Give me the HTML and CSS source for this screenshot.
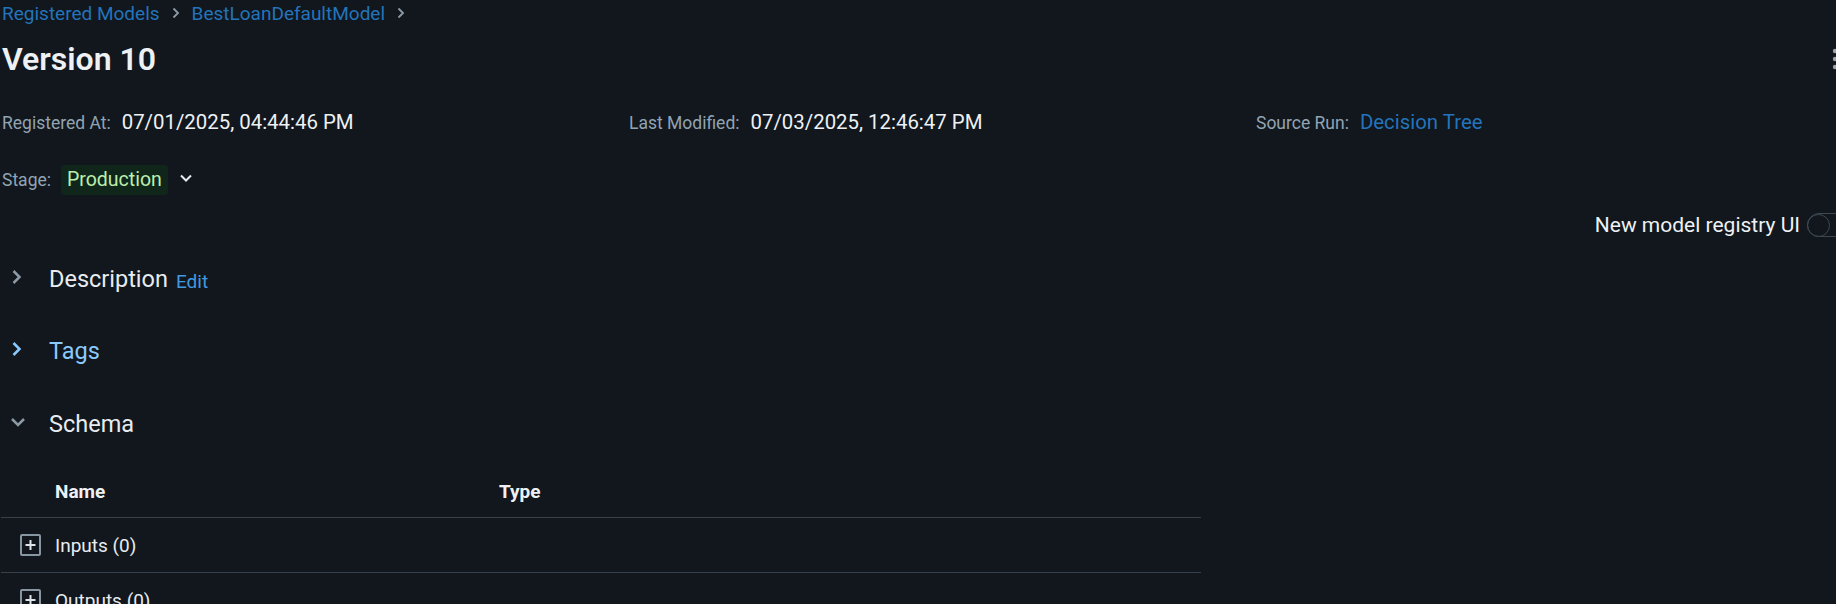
FILE: index.html
```html
<!DOCTYPE html>
<html lang="en">
<head>
<meta charset="utf-8">
<title>Version 10 - BestLoanDefaultModel</title>
<link rel="stylesheet" href="styles.css">
</head>
<body>
<div class="page">
  <nav class="breadcrumb">
    <a class="crumb" href="#">Registered Models</a>
    <svg class="crumb-sep" width="8" height="12" viewBox="0 0 8 12"><polyline points="1.5,1.5 6,6 1.5,10.5" fill="none" stroke="#8d9aa6" stroke-width="1.8"/></svg>
    <a class="crumb" href="#">BestLoanDefaultModel</a>
    <svg class="crumb-sep" width="8" height="12" viewBox="0 0 8 12"><polyline points="1.5,1.5 6,6 1.5,10.5" fill="none" stroke="#8d9aa6" stroke-width="1.8"/></svg>
  </nav>

  <div class="title-row">
    <h1 class="title">Version 10</h1>
    <svg class="kebab" width="6" height="24" viewBox="0 0 6 24"><circle cx="3" cy="4" r="2.2" fill="#98a4ae"/><circle cx="3" cy="12" r="2.2" fill="#98a4ae"/><circle cx="3" cy="20" r="2.2" fill="#98a4ae"/></svg>
  </div>

  <div class="meta">
    <div class="meta-item"><span class="meta-label">Registered At:</span><span class="meta-value">07/01/2025, 04:44:46 PM</span></div>
    <div class="meta-item"><span class="meta-label">Last Modified:</span><span class="meta-value">07/03/2025, 12:46:47 PM</span></div>
    <div class="meta-item"><span class="meta-label">Source Run:</span><a class="meta-link" href="#">Decision Tree</a></div>
  </div>

  <div class="stage-row">
    <span class="meta-label">Stage:</span>
    <span class="badge">Production</span>
    <svg class="stage-caret" width="14" height="10" viewBox="0 0 14 10"><polyline points="2,2.5 7,7.5 12,2.5" fill="none" stroke="#e8ecf0" stroke-width="2"/></svg>
  </div>

  <div class="toggle-row">
    <span class="toggle-label">New model registry UI</span>
    <span class="toggle"><span class="knob"></span></span>
  </div>

  <section class="section">
    <div class="section-head">
      <span class="chev"><svg width="16" height="16" viewBox="0 0 16 16"><polyline points="3.5,2 9.5,8 3.5,14" fill="none" stroke="#8d9aa6" stroke-width="2.5"/></svg></span>
      <span class="section-title">Description</span>
      <a class="edit" href="#">Edit</a>
    </div>
  </section>

  <section class="section">
    <div class="section-head">
      <span class="chev"><svg width="16" height="16" viewBox="0 0 16 16"><polyline points="3.5,2 9.5,8 3.5,14" fill="none" stroke="#8acaff" stroke-width="2.5"/></svg></span>
      <span class="section-title tags">Tags</span>
    </div>
  </section>

  <section class="section">
    <div class="section-head">
      <span class="chev"><svg width="16" height="16" viewBox="0 0 16 16"><polyline points="2,5 8,11 14,5" fill="none" stroke="#8d9aa6" stroke-width="2.5"/></svg></span>
      <span class="section-title">Schema</span>
    </div>
  </section>

  <div class="schema-table">
    <div class="thead">
      <div class="th name-col">Name</div>
      <div class="th">Type</div>
    </div>
    <div class="tr">
      <div class="td name-cell">
        <svg class="expand" width="21" height="22" viewBox="0 0 21 22"><rect x="1" y="1" width="19" height="20" rx="1" fill="none" stroke="#8896a2" stroke-width="2"/><path d="M10.5 6v10M5.5 11h10" stroke="#dfe4e8" stroke-width="2"/></svg>
        <span>Inputs (0)</span>
      </div>
      <div class="td"></div>
    </div>
    <div class="tr">
      <div class="td name-cell">
        <svg class="expand" width="21" height="22" viewBox="0 0 21 22"><rect x="1" y="1" width="19" height="20" rx="1" fill="none" stroke="#8896a2" stroke-width="2"/><path d="M10.5 6v10M5.5 11h10" stroke="#dfe4e8" stroke-width="2"/></svg>
        <span>Outputs (0)</span>
      </div>
      <div class="td"></div>
    </div>
  </div>
</div>
</body>
</html>
```

FILE: styles.css
```css
html, body {
  margin: 0;
  padding: 0;
  overflow: hidden;
}

body {
  background: #11171d;
  color: #e8ecf0;
  font-family: Roboto, "Liberation Sans", sans-serif;
}

a {
  text-decoration: none;
}

.page {
  padding-left: 2px;
  width: 1878px;
}

.breadcrumb {
  display: flex;
  align-items: center;
  gap: 12px;
  height: 26px;
  font-size: 19px;
}

.crumb {
  color: #2374bb;
}

.title-row {
  display: flex;
  align-items: center;
  justify-content: space-between;
  width: 1836px;
  height: 66px;
}

.title {
  margin: 0;
  font-size: 32px;
  font-weight: 600;
  line-height: 66px;
  color: #eef1f4;
}

.meta {
  display: grid;
  grid-template-columns: 627px 627px 627px;
  margin-top: 12px;
  height: 36px;
  align-items: center;
}

.meta-item {
  display: flex;
  align-items: baseline;
  gap: 11px;
}

.meta-label {
  font-size: 17.5px;
  color: #92a4b3;
}

.meta-value {
  font-size: 20.4px;
  color: #eef1f4;
}

.meta-link {
  font-size: 20.4px;
  color: #2374bb;
}

.stage-row {
  display: flex;
  align-items: center;
  margin-top: 25px;
  height: 30px;
}

.badge {
  margin-left: 10px;
  height: 30px;
  line-height: 30px;
  padding: 0 6px;
  border-radius: 4px;
  background: #10261b;
  color: #bdeeab;
  font-size: 19.5px;
}

.stage-caret {
  margin-left: 11px;
  margin-top: -4px;
}

.toggle-row {
  display: flex;
  align-items: center;
  justify-content: flex-end;
  gap: 7px;
  width: 1849px;
  margin-top: 18px;
  height: 24px;
}

.toggle-label {
  font-size: 21px;
  color: #eef1f4;
}

.toggle {
  display: flex;
  align-items: center;
  box-sizing: border-box;
  width: 44px;
  height: 24px;
  border: 1.5px solid #3d4852;
  border-radius: 12px;
}

.knob {
  box-sizing: border-box;
  width: 23px;
  height: 23px;
  margin-left: -1.5px;
  border: 1.5px solid #3d4852;
  border-radius: 50%;
}

.section {
  margin-top: 32px;
}

.section:first-of-type {
  margin-top: 22px;
}

.section:nth-of-type(3) {
  margin-top: 33px;
}

.section-head {
  display: flex;
  align-items: center;
  height: 40px;
}

.chev {
  display: flex;
  align-items: center;
  width: 47px;
  padding-left: 8px;
  box-sizing: border-box;
  margin-top: -4px;
}

.section-title {
  font-size: 23.5px;
  color: #e8ecf0;
}

.section-title.tags {
  color: #8acaff;
}

.edit {
  margin-left: 8px;
  margin-top: 4px;
  font-size: 19px;
  color: #4299e0;
}

.schema-table {
  width: 1200px;
  margin-left: -1px;
  margin-top: 22px;
}

.thead {
  display: grid;
  grid-template-columns: 498px 1fr;
  align-items: center;
  height: 51px;
  border-bottom: 1px solid #36414b;
}

.th {
  font-size: 19px;
  font-weight: 700;
  color: #eef1f4;
}

.name-col {
  padding-left: 54px;
}

.tr {
  display: grid;
  grid-template-columns: 498px 1fr;
  align-items: center;
  height: 54px;
  border-bottom: 1px solid #36414b;
}

.td {
  font-size: 19px;
  color: #e8ecf0;
}

.name-cell {
  display: flex;
  align-items: center;
  gap: 14px;
  padding-left: 19px;
}
```
